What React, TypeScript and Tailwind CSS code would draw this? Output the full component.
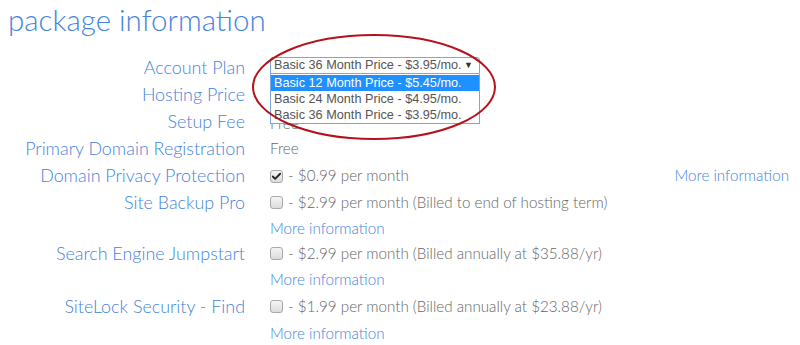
import { Check } from "lucide-react";

const blue = "text-[#4384dc]";

function Box({ checked = false }: { checked?: boolean }) {
  return (
    <span className="mr-[1px] inline-flex h-[13px] w-[13px] items-center justify-center rounded-[3px] border border-[#a9a9a9] bg-gradient-to-b from-[#f4f4f4] to-[#dcdcdc] align-[-1px]">
      {checked && <Check className="h-[11px] w-[11px] text-[#222]" strokeWidth={4} />}
    </span>
  );
}

function Label({ children }: { children?: React.ReactNode }) {
  return <div className={`text-right text-[17.9px] ${blue}`}>{children}</div>;
}

function MoreInfo() {
  return <span className={`text-[15.2px] ${blue}`}>More information</span>;
}

export default function App() {
  return (
    <div className="relative h-[345px] w-[800px] overflow-hidden bg-white font-['Lato',sans-serif] text-[15.2px] font-light text-[#666]">
      <h1 className="h-[53.5px] pl-[8px] pt-[1px] text-[29.5px] leading-[38px] font-light text-[#4384dc]">
        package information
      </h1>
      <div className="grid grid-cols-[245px_1fr] grid-rows-[27px_27px_27px_27px_27px_27px_25px_25px_27px_27px_27px] gap-x-[25px] leading-[27px]">
        <Label>Account Plan</Label>
        <div />
        <Label>Hosting Price</Label>
        <div />
        <Label>Setup Fee</Label>
        <div className="pt-[2px]">Free</div>
        <Label>Primary Domain Registration</Label>
        <div>Free</div>
        <Label>Domain Privacy Protection</Label>
        <div className="flex justify-between pr-[11px]">
          <span>
            <Box checked /> - $0.99 per month
          </span>
          <MoreInfo />
        </div>
        <Label>Site Backup Pro</Label>
        <div>
          <Box /> - $2.99 per month (Billed to end of hosting term)
        </div>
        <Label />
        <div className="leading-[25px]">
          <MoreInfo />
        </div>
        <div className={`text-right text-[17.9px] leading-[25px] ${blue}`}>Search Engine Jumpstart</div>
        <div className="leading-[25px]">
          <Box /> - $2.99 per month (Billed annually at $35.88/yr)
        </div>
        <Label />
        <div>
          <MoreInfo />
        </div>
        <Label>SiteLock Security - Find</Label>
        <div>
          <Box /> - $1.99 per month (Billed annually at $23.88/yr)
        </div>
        <Label />
        <div>
          <MoreInfo />
        </div>
      </div>

      {/* open select with its dropdown */}
      <div className="absolute left-[270px] top-[57px] w-[210px] whitespace-nowrap font-['Liberation_Sans',Arial,sans-serif] text-[12.7px] font-normal text-[#555]">
        <div className="flex h-[17px] items-center justify-between rounded-t-[3px] border border-[#7aa7e0] bg-white pl-[3px] pr-[6px]">
          <span>Basic 36 Month Price - $3.95/mo.</span>
          <span className="text-[9px] text-[#333]">▼</span>
        </div>
        <div className="border border-t-0 border-[#7aa7e0] bg-white pt-[1px] leading-[16px]">
          <div className="bg-[#1e90ff] pl-[3px] text-white">Basic 12 Month Price - $5.45/mo.</div>
          <div className="pl-[3px]">Basic 24 Month Price - $4.95/mo.</div>
          <div className="pl-[3px]">Basic 36 Month Price - $3.95/mo.</div>
        </div>
      </div>

      <svg className="pointer-events-none absolute left-0 top-0" width="800" height="345">
        <ellipse cx="374" cy="87" rx="121" ry="52" fill="none" stroke="#b5121b" strokeWidth="2" />
      </svg>
    </div>
  );
}
